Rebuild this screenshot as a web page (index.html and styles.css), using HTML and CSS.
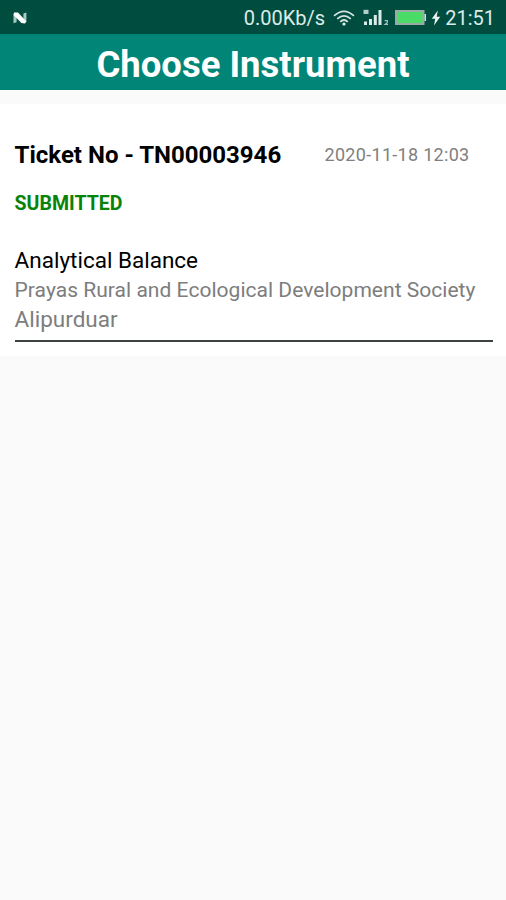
FILE: index.html
```html
<!DOCTYPE html>
<html lang="en">
<head>
<meta charset="utf-8">
<title>Choose Instrument</title>
<link rel="stylesheet" href="styles.css">
</head>
<body>
<div class="status-bar">
  <svg class="n-logo" width="14" height="12" viewBox="0 0 14 12"><path d="M0.5 11.2V1.8L3.6 3.4V10.2ZM13.4 0.5V10L10.4 8.6V1.6Z" fill="#a9c9c2"/><path d="M1 0.4L5 0.6L13.3 9.4L12 11.6L8.4 11L0.6 3Z" fill="#fff"/></svg>
  <span class="speed">0.00Kb/s</span>
  <svg class="wifi" width="22" height="16" viewBox="0 0 22 16" fill="none" stroke="#cfe3df" stroke-width="1.7"><path d="M1 5.8Q11-3.2 21 5.8M4.2 8.9Q11 2.7 17.8 8.9M7.2 11.8Q11 8.2 14.8 11.8"/><circle cx="11" cy="14" r="1.6" fill="#e4f0ee" stroke="none"/></svg>
  <svg class="signal" width="27" height="17" viewBox="0 0 27 17" fill="#dcebe8"><path d="M0.5 0.8H5.5V5H0.5Z" fill="#b2cec8"/><path d="M1 12.5H4V16H1ZM6 10H9V16H6ZM10.8 6H13.8V16H10.8ZM15.5 1H18.5V16H15.5Z"/><path d="M21.6 11.6H24.4V13.4L22 15.4H25" fill="none" stroke="#a6c6bf" stroke-width="1.1"/></svg>
  <svg class="battery" width="32" height="15" viewBox="0 0 32 15"><rect x="1" y="1" width="27.5" height="13" fill="#4bdc68" stroke="#9aaba6" stroke-width="2"/><path d="M29.5 4H31V11H29.5Z" fill="#d4e3df"/></svg>
  <svg class="bolt" width="10" height="16" viewBox="0 0 10 16"><path d="M6.8 0.5L0.8 8.8H4.2L3 15.5L9.2 6.8H5.7Z" fill="#e8f3f0"/></svg>
  <span class="clock">21:51</span>
</div>
<header class="app-bar"><h1>Choose Instrument</h1></header>
<main class="card">
  <div class="card-head">
    <h2>Ticket No - TN00003946</h2>
    <time>2020-11-18 12:03</time>
  </div>
  <p class="status">SUBMITTED</p>
  <div class="details">
    <p class="device">Analytical Balance</p>
    <p class="org">Prayas Rural and Ecological Development Society</p>
    <p class="place">Alipurduar</p>
  </div>
</main>
</body>
</html>
```

FILE: styles.css
```css
* { box-sizing: border-box; }
body { margin: 0; min-height: 900px; background: #fafafa; color: #000; font-family: Roboto, sans-serif; }
h1, h2, p { margin: 0; white-space: nowrap; }
svg { display: block; flex: none; }
.status-bar { height: 34px; padding: 2px 11px 0 13px; display: flex; align-items: center; background: #004d40; color: #dcebe8; }
.speed { margin-left: auto; font-size: 20px; }
.wifi { margin-left: 8px; margin-bottom: 1px; }
.signal { margin-left: 8px; margin-bottom: 1px; }
.battery { margin-left: 5px; margin-bottom: 1px; }
.bolt { margin-left: 4px; }
.clock { margin-left: 4px; font-size: 20px; }
.app-bar { height: 56px; display: flex; align-items: center; justify-content: center; background: #008577; color: #fff; }
.app-bar h1 { font-size: 36.5px; line-height: 42px; font-weight: 700; padding-top: 5px; }
.card { height: 252px; margin-top: 14px; padding: 35px 13.5px 15px 14.6px; background: #fff; }
.card-head { height: 32px; display: flex; align-items: center; justify-content: space-between; padding-right: 23px; }
.card-head h2 { font-size: 24px; font-weight: 700; }
.card-head time { font-size: 18px; letter-spacing: 0.3px; padding-bottom: 2px; color: #808080; }
.status { margin-top: 19px; font-size: 19.5px; line-height: 28px; font-weight: 700; color: #078307; }
.details { margin-top: 23px; height: 101px; padding-top: 4px; border-bottom: 2px solid #3e4141; line-height: 30px; color: #7d7d7d; }
.device { color: #000; font-size: 22.5px; }
.org { font-size: 21px; letter-spacing: 0.03px; }
.place { font-size: 22.5px; line-height: 28px; }
```
